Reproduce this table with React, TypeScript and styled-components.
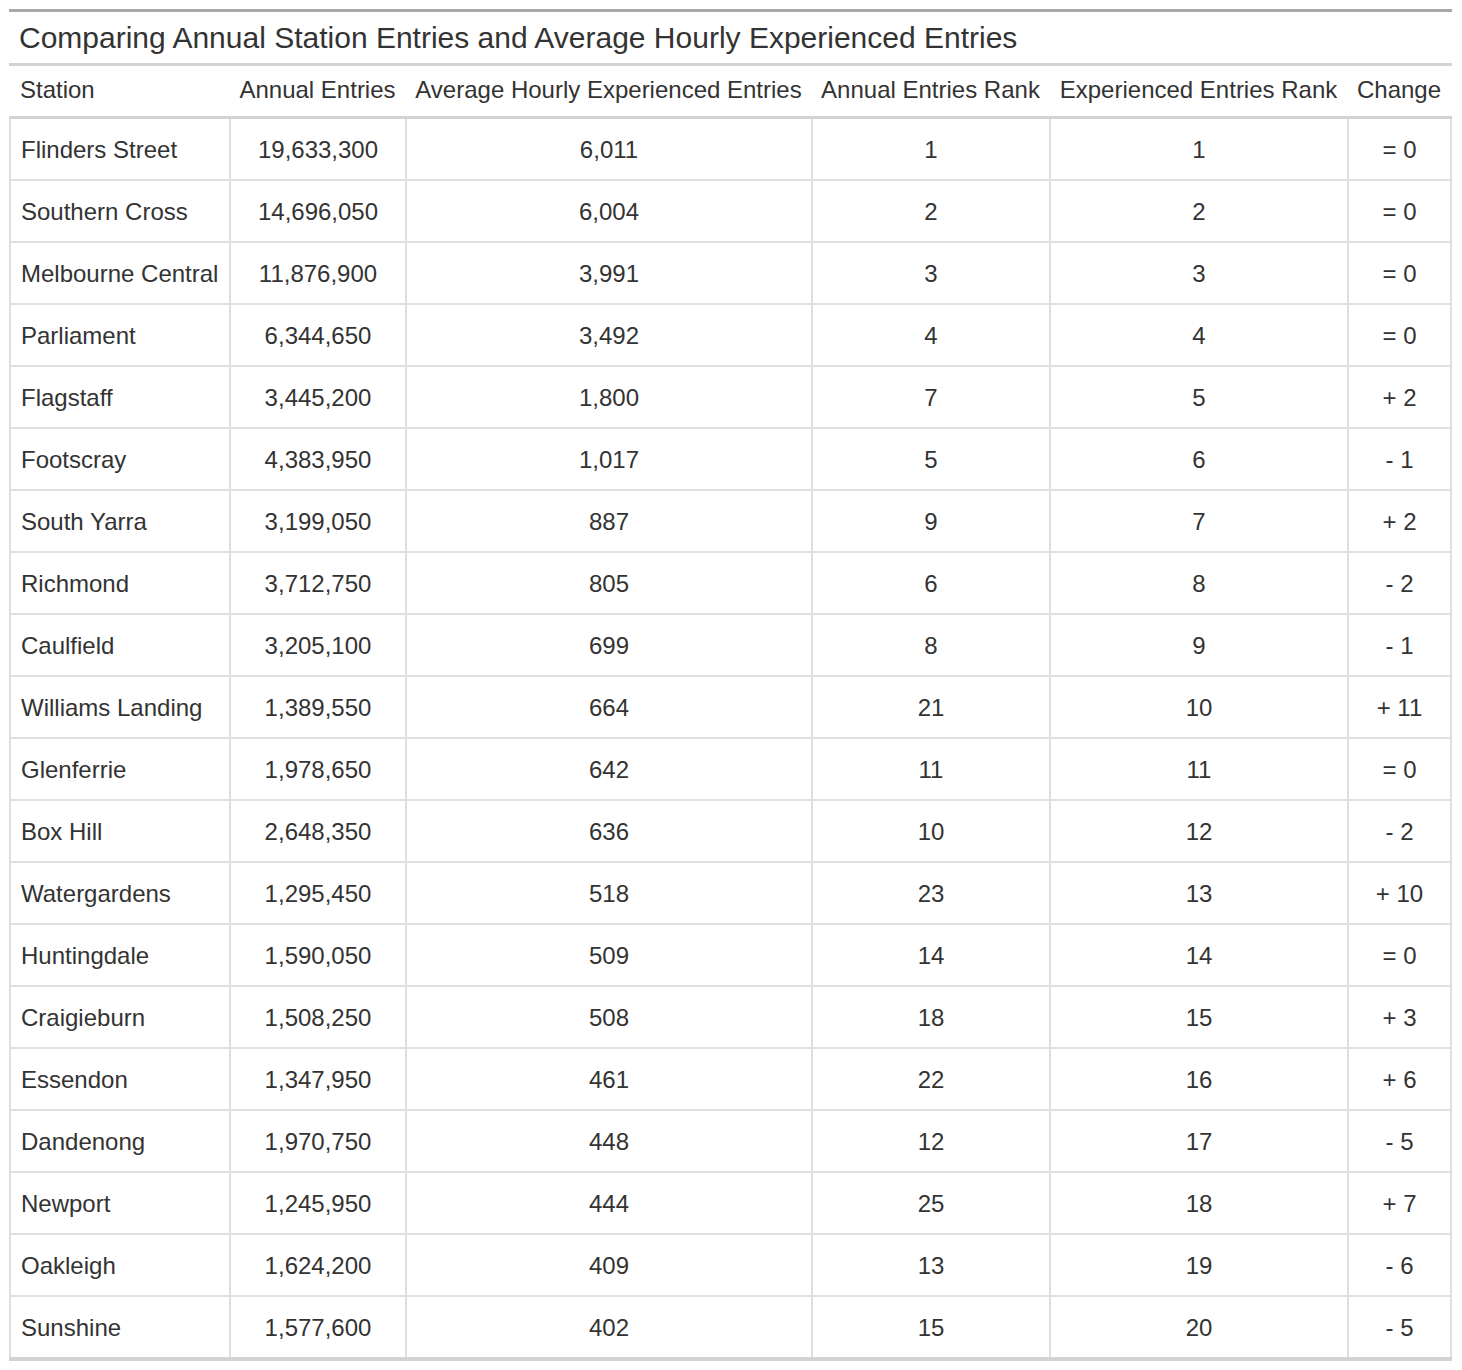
import React from "react";
import styled, { createGlobalStyle } from "styled-components";

const GlobalStyle = createGlobalStyle`
  body {
    margin: 0;
    background: #ffffff;
  }
`;

interface Station {
  name: string;
  annual: number;
  hourly: number;
  annualRank: number;
  expRank: number;
}

const stations: Station[] = [
  { name: "Flinders Street", annual: 19633300, hourly: 6011, annualRank: 1, expRank: 1 },
  { name: "Southern Cross", annual: 14696050, hourly: 6004, annualRank: 2, expRank: 2 },
  { name: "Melbourne Central", annual: 11876900, hourly: 3991, annualRank: 3, expRank: 3 },
  { name: "Parliament", annual: 6344650, hourly: 3492, annualRank: 4, expRank: 4 },
  { name: "Flagstaff", annual: 3445200, hourly: 1800, annualRank: 7, expRank: 5 },
  { name: "Footscray", annual: 4383950, hourly: 1017, annualRank: 5, expRank: 6 },
  { name: "South Yarra", annual: 3199050, hourly: 887, annualRank: 9, expRank: 7 },
  { name: "Richmond", annual: 3712750, hourly: 805, annualRank: 6, expRank: 8 },
  { name: "Caulfield", annual: 3205100, hourly: 699, annualRank: 8, expRank: 9 },
  { name: "Williams Landing", annual: 1389550, hourly: 664, annualRank: 21, expRank: 10 },
  { name: "Glenferrie", annual: 1978650, hourly: 642, annualRank: 11, expRank: 11 },
  { name: "Box Hill", annual: 2648350, hourly: 636, annualRank: 10, expRank: 12 },
  { name: "Watergardens", annual: 1295450, hourly: 518, annualRank: 23, expRank: 13 },
  { name: "Huntingdale", annual: 1590050, hourly: 509, annualRank: 14, expRank: 14 },
  { name: "Craigieburn", annual: 1508250, hourly: 508, annualRank: 18, expRank: 15 },
  { name: "Essendon", annual: 1347950, hourly: 461, annualRank: 22, expRank: 16 },
  { name: "Dandenong", annual: 1970750, hourly: 448, annualRank: 12, expRank: 17 },
  { name: "Newport", annual: 1245950, hourly: 444, annualRank: 25, expRank: 18 },
  { name: "Oakleigh", annual: 1624200, hourly: 409, annualRank: 13, expRank: 19 },
  { name: "Sunshine", annual: 1577600, hourly: 402, annualRank: 15, expRank: 20 },
];

const columns = [
  { label: "Station", align: "left" },
  { label: "Annual Entries", align: "center" },
  { label: "Average Hourly Experienced Entries", align: "center" },
  { label: "Annual Entries Rank", align: "center" },
  { label: "Experienced Entries Rank", align: "center" },
  { label: "Change", align: "center" },
] as const;

const COLS = "222px 176px 406px 238px 298px 103px";

const fmt = (n: number) => n.toLocaleString("en-US");

const change = (s: Station) => {
  const d = s.annualRank - s.expRank;
  if (d === 0) return "= 0";
  return d > 0 ? `+ ${d}` : `- ${-d}`;
};

const Page = styled.div`
  padding: 9px;
  font-family: "Liberation Sans", Arial, sans-serif;
  color: #333333;
`;

const Table = styled.div`
  width: 1443px;
  border-top: 3px solid #a8a8a8;
`;

const Title = styled.div`
  height: 54px;
  box-sizing: border-box;
  display: flex;
  align-items: center;
  padding-left: 10px;
  font-size: 30px;
  border-bottom: 3px solid #d3d3d3;
`;

const HeaderRow = styled.div`
  display: grid;
  grid-template-columns: ${COLS};
  height: 53px;
  box-sizing: border-box;
  padding-bottom: 2px;
  border-bottom: 3px solid #d3d3d3;
`;

const HeadCell = styled.div<{ $align: string }>`
  display: flex;
  align-items: center;
  justify-content: ${(p) => (p.$align === "left" ? "flex-start" : "center")};
  padding: ${(p) => (p.$align === "left" ? "0 11px" : "0 12px 0 9px")};
  font-size: 24px;
  white-space: nowrap;
`;

const BodyRow = styled.div<{ $last?: boolean }>`
  display: grid;
  grid-template-columns: ${COLS};
  height: ${(p) => (p.$last ? 64 : 62)}px;
  box-sizing: border-box;
  border-bottom: ${(p) => (p.$last ? "4px solid #d3d3d3" : "2px solid #dfdfdf")};
`;

const Cell = styled.div<{ $align: string; $first?: boolean }>`
  display: flex;
  align-items: center;
  justify-content: ${(p) => (p.$align === "left" ? "flex-start" : "center")};
  padding: 2px ${(p) => (p.$align === "left" ? "9px 0 10px" : "9px 0 9px")};
  font-size: 24px;
  white-space: nowrap;
  border-right: 2px solid #dfdfdf;
  border-left: ${(p) => (p.$first ? "2px solid #dfdfdf" : "none")};
`;

export default function App() {
  return (
    <>
      <GlobalStyle />
      <Page>
        <Table>
          <Title>Comparing Annual Station Entries and Average Hourly Experienced Entries</Title>
          <HeaderRow>
            {columns.map((c) => (
              <HeadCell key={c.label} $align={c.align}>
                {c.label}
              </HeadCell>
            ))}
          </HeaderRow>
          {stations.map((s, i) => {
            const values = [s.name, fmt(s.annual), fmt(s.hourly), s.annualRank, s.expRank, change(s)];
            return (
              <BodyRow key={s.name} $last={i === stations.length - 1}>
                {values.map((v, j) => (
                  <Cell key={j} $align={columns[j].align} $first={j === 0}>
                    {v}
                  </Cell>
                ))}
              </BodyRow>
            );
          })}
        </Table>
      </Page>
    </>
  );
}
